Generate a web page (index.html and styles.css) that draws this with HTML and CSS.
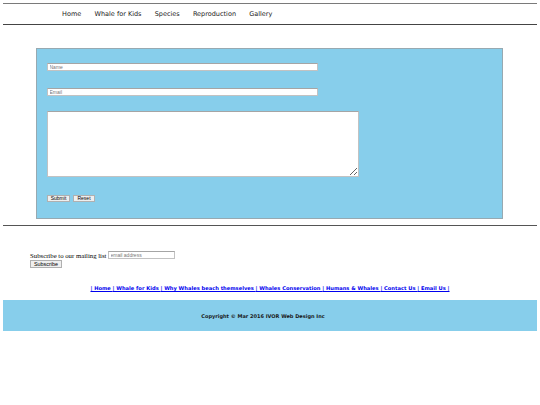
FILE: index.html
```html
<!DOCTYPE html>
<html lang="en">
<head>
<meta charset="utf-8">
<title>Contact - Whales</title>
<link rel="stylesheet" href="styles.css">
</head>
<body>
<header class="site-header">
  <ul class="nav">
    <li><a href="#">Home</a></li>
    <li><a href="#">Whale for Kids</a></li>
    <li><a href="#">Species</a></li>
    <li><a href="#">Reproduction</a></li>
    <li><a href="#">Gallery</a></li>
  </ul>
</header>

<main class="content">
  <form class="contact-form">
    <input class="field" type="text" placeholder="Name">
    <input class="field field-email" type="text" placeholder="Email">
    <textarea class="message"></textarea>
    <div class="actions">
      <button type="button" class="btn btn-submit">Submit</button>
      <button type="button" class="btn btn-reset">Reset</button>
    </div>
  </form>
</main>

<hr class="divider">

<section class="subscribe">
  <div class="subscribe-row">Subscribe to our mailing list <input class="sub-input" type="text" placeholder="email address"></div>
  <button type="button" class="sub-btn">Subscribe</button>
</section>

<p class="footer-links"><a href="#">| Home </a><a href="#">| Whale for Kids </a><a href="#">| Why Whales beach themselves </a><a href="#">| Whales Conservation </a><a href="#">| Humans &amp; Whales </a><a href="#">| Contact Us </a><a href="#">| Email Us |</a></p>

<footer class="site-footer">
  <p class="copyright">Copyright © Mar 2016 IVOR Web Design Inc</p>
</footer>
</body>
</html>
```

FILE: styles.css
```css
html {
  background: #fff;
}

body {
  margin: 3px;
  font-family: "Liberation Serif", "Times New Roman", serif;
  font-size: 6.75px;
  color: #000;
}

.site-header {
  border-top: 1px solid #7a7a7a;
  border-bottom: 1px solid #444;
}

.nav {
  list-style: none;
  margin: 0;
  padding: 0 0 0 52.5px;
  height: 20px;
  display: flex;
  align-items: center;
}

.nav a {
  display: block;
  padding: 0 6.6px;
  font-family: "DejaVu Sans", Verdana, sans-serif;
  font-size: 6.5px;
  color: #222;
  text-decoration: none;
}

.content {
  padding-top: 23px;
}

.contact-form {
  box-sizing: border-box;
  width: 467px;
  margin: 0 0 0 33px;
  background: #87ceeb;
  border: 1px solid #97a9b1;
  padding: 14px 10px 16px;
  display: flex;
  flex-direction: column;
  align-items: flex-start;
}

.field,
.sub-input {
  box-sizing: border-box;
  height: 8px;
  margin: 0;
  padding: 0 1.5px;
  border: 1px solid #c2c2c2;
  border-top-color: #a5a5a5;
  background: #fff;
  font-family: "Liberation Sans", Arial, sans-serif;
  font-size: 5px;
}

.field {
  width: 271px;
}

.field::placeholder,
.sub-input::placeholder {
  color: #777;
}

.field-email {
  margin-top: 17px;
}

.message {
  box-sizing: border-box;
  width: 312px;
  height: 66px;
  margin: 15px 0 0;
  border: 1px solid #c2c2c2;
  border-top-color: #a5a5a5;
  background: #fff;
}

.actions {
  margin-top: 18px;
  display: flex;
  gap: 3px;
}

.btn,
.sub-btn {
  box-sizing: border-box;
  height: 7px;
  padding: 0;
  border: 1px solid #b0b0b0;
  background: #efefef;
  font-family: "Liberation Sans", Arial, sans-serif;
  font-size: 5px;
  line-height: 5px;
  color: #000;
}

.btn-submit {
  width: 23px;
}

.btn-reset {
  width: 22px;
}

.divider {
  margin: 6px 0 0;
  border: 0;
  border-top: 1px solid #555;
  height: 0;
}

.subscribe {
  padding: 25px 0 0 27px;
}

.subscribe-row {
  display: flex;
  align-items: center;
  gap: 1.5px;
}

.sub-input {
  width: 67px;
}

.sub-btn {
  margin-top: 1px;
  width: 32px;
  height: 8px;
  font-size: 5.4px;
}

.footer-links {
  margin: 17px 0 0;
  text-align: center;
  font-family: "DejaVu Sans", Verdana, sans-serif;
  font-size: 5.15px;
  font-weight: bold;
  line-height: 6px;
}

.footer-links a {
  color: #0000ee;
  text-decoration: underline;
}

.site-footer {
  margin-top: 9px;
  height: 31px;
  background: #87ceeb;
  display: flex;
  align-items: center;
  justify-content: center;
}

.copyright {
  margin: 0;
  padding-right: 14px;
  font-family: "DejaVu Sans", Verdana, sans-serif;
  font-size: 5px;
  font-weight: bold;
  color: #1a1a1a;
}
```
